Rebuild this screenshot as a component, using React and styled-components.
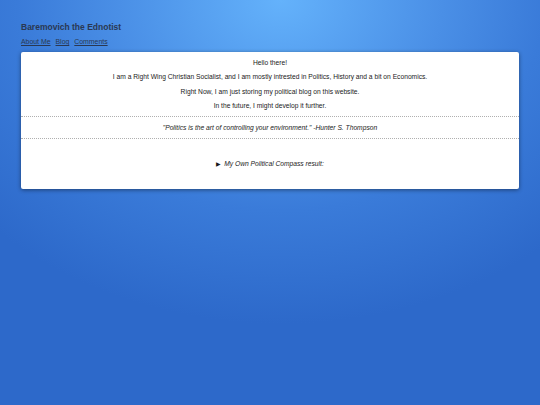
import React from 'react';
import styled, { createGlobalStyle } from 'styled-components';

const GlobalStyle = createGlobalStyle`
  html, body {
    margin: 0;
    padding: 0;
    min-height: 100%;
  }
  body {
    font-family: "Liberation Sans", Arial, sans-serif;
    background: radial-gradient(ellipse 75% 80% at 52% 0%, #64b2fb 0%, #4a8fe6 40%, #3a7bd9 65%, #2d69ca 100%);
    background-color: #2d69ca;
    min-height: 405px;
  }
`;

const Page = styled.div`
  padding: 22px 21px 21px;
`;

const Title = styled.h1`
  font-size: 8.5px;
  font-weight: bold;
  color: #2a3852;
  margin: 0 0 5px;
  line-height: 11px;
`;

const Nav = styled.nav`
  display: flex;
  gap: 5px;
  margin-bottom: 6px;
`;

const NavLink = styled.a`
  font-size: 6.9px;
  color: #2a3852;
  text-decoration: underline;
  line-height: 8px;
`;

const Card = styled.main`
  background: #ffffff;
  border-radius: 2px;
  box-shadow: 0 1px 4px rgba(0, 0, 0, 0.45);
  color: #1a1a1a;
  text-align: center;
`;

const Intro = styled.section`
  padding: 7px 0 6px;
`;

const Paragraph = styled.p`
  font-size: 6.7px;
  line-height: 8px;
  margin: 0 0 6.3px;
  &:last-child { margin-bottom: 0; }
`;

const Quote = styled.blockquote`
  margin: 0;
  padding: 7px 0 6px;
  border-top: 1px dotted #b0b0b0;
  border-bottom: 1px dotted #b0b0b0;
  font-size: 6.7px;
  line-height: 8px;
  font-style: italic;
`;

const Extra = styled.details`
  padding: 21px 0;
  font-size: 6.7px;
  line-height: 8px;
`;

const Summary = styled.summary`
  font-style: italic;
  cursor: pointer;
  list-style: none;
  &::-webkit-details-marker { display: none; }
  &::before {
    content: "\u25B6";
    font-style: normal;
    font-size: 5.5px;
    margin-right: 3px;
  }
`;

export default function App() {
  return (
    <>
      <GlobalStyle />
      <Page>
        <Title>Baremovich the Ednotist</Title>
        <Nav>
          <NavLink href="#about">About Me</NavLink>
          <NavLink href="#blog">Blog</NavLink>
          <NavLink href="#comments">Comments</NavLink>
        </Nav>
        <Card>
          <Intro>
            <Paragraph>Hello there!</Paragraph>
            <Paragraph>I am a Right Wing Christian Socialist, and I am mostly intrested in Politics, History and a bit on Economics.</Paragraph>
            <Paragraph>Right Now, I am just storing my political blog on this website.</Paragraph>
            <Paragraph>In the future, I might develop it further.</Paragraph>
          </Intro>
          <Quote>"Politics is the art of controlling your environment." -Hunter S. Thompson</Quote>
          <Extra>
            <Summary>My Own Political Compass result:</Summary>
          </Extra>
        </Card>
      </Page>
    </>
  );
}
